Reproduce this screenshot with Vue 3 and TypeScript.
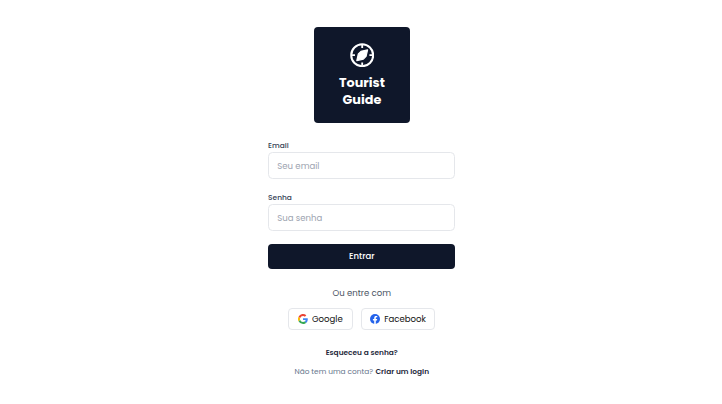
<script setup lang="ts">
import { ref } from 'vue'

interface Field {
  id: string
  label: string
  type: string
  placeholder: string
}

const fields: Field[] = [
  { id: 'email', label: 'Email', type: 'email', placeholder: 'Seu email' },
  { id: 'senha', label: 'Senha', type: 'password', placeholder: 'Sua senha' },
]

const values = ref<Record<string, string>>({ email: '', senha: '' })
</script>

<template>
  <main class="page">
    <div class="logo">
      <svg class="compass" viewBox="0 0 24 24" fill="none">
        <circle cx="12" cy="12" r="10.8" stroke="#fff" stroke-width="2" />
        <path d="M12 1.5v3.4M12 19.1v3.4M1.5 12h3.4M19.1 12h3.4" stroke="#fff" stroke-width="1.8" />
        <path d="M17.3 6.7 15.8 13.2 13.2 15.8 6.7 17.3 8.2 10.8 10.8 8.2Z" fill="#fff" stroke="#fff" stroke-width="1.2" stroke-linejoin="round" />
      </svg>
      <span class="brand">Tourist</span>
      <span class="brand">Guide</span>
    </div>

    <form class="form" @submit.prevent>
      <div v-for="f in fields" :key="f.id" class="field">
        <label :for="f.id">{{ f.label }}</label>
        <input :id="f.id" v-model="values[f.id]" :type="f.type" :placeholder="f.placeholder" />
      </div>
      <button class="submit" type="submit">Entrar</button>
    </form>

    <p class="divider">Ou entre com</p>
    <div class="social">
      <button class="google" type="button">
        <svg viewBox="0 0 48 48">
          <path fill="#fbbc05" d="M10.5 28.6A14.5 14.5 0 0 1 10.5 19.4L2.6 13.2a24 24 0 0 0 0 21.6z" />
          <path fill="#ea4335" d="M24 9.5c3.5 0 6.7 1.2 9.2 3.6L40 6.2A24 24 0 0 0 2.6 13.2l7.9 6.2A14.4 14.4 0 0 1 24 9.5z" />
          <path fill="#34a853" d="M24 48c6.5 0 12-2.1 15.9-5.8l-7.7-6c-2.2 1.5-4.9 2.3-8.2 2.3a14.4 14.4 0 0 1-13.5-9.9l-7.9 6.2A24 24 0 0 0 24 48z" />
          <path fill="#4285f4" d="M47 24.6c0-1.6-.2-3.1-.4-4.6H24v9h12.9a11 11 0 0 1-4.7 7.2l7.7 6c4.5-4.2 7.1-10.4 7.1-17.6z" />
        </svg>
        <span>Google</span>
      </button>
      <button class="facebook" type="button">
        <svg viewBox="0 0 24 24">
          <circle cx="12" cy="12" r="12" fill="#2563eb" />
          <path fill="#fff" d="M10.1 24v-8.5H7V12h3.1V9.4c0-3.1 1.8-4.7 4.6-4.7 1.3 0 2.7.2 2.7.2v3h-1.5c-1.5 0-2 .9-2 1.9V12h3.4l-.6 3.5h-2.8V24z" />
        </svg>
        <span>Facebook</span>
      </button>
    </div>

    <a class="forgot">Esqueceu a senha?</a>
    <p class="signup"><span>Não tem uma conta?</span><a>Criar um login</a></p>
  </main>
</template>

<style>
body {
  background: #fff;
}
</style>

<style scoped>
.page {
  box-sizing: border-box;
  height: 404px;
  padding: 27px 0 0 1.5px;
  display: flex;
  flex-direction: column;
  align-items: center;
  font-family: Poppins, Inter, sans-serif;
  color: #1e293b;
}

.logo {
  box-sizing: border-box;
  width: 95.8px;
  height: 95.8px;
  padding: 15.9px 0 0 0.4px;
  border-radius: 4px;
  background: #0f172a;
  display: flex;
  flex-direction: column;
  align-items: center;
}

.compass {
  width: 24.4px;
  height: 24.4px;
  margin-bottom: 6.7px;
}

.brand {
  color: #fff;
  font-size: 12.8px;
  font-weight: 700;
  line-height: 17px;
}

.form {
  width: 187.3px;
  margin-top: 17.2px;
}

.field {
  height: 52px;
  display: flex;
  flex-direction: column;
}

label {
  height: 12.4px;
  line-height: 12px;
  font-size: 7.45px;
  font-weight: 500;
  color: #334155;
}

input {
  box-sizing: border-box;
  width: 100%;
  height: 27px;
  padding: 1.2px 8.2px 0;
  border: 1px solid #e5e7eb;
  border-radius: 4.5px;
  background: #fff;
  font: inherit;
  font-size: 8.55px;
  outline: none;
}

input::placeholder {
  color: #9ca3af;
  opacity: 1;
}

button {
  padding: 0;
  border: 0;
  font: inherit;
}

.submit {
  width: 100%;
  height: 25.5px;
  display: block;
  border-radius: 4px;
  background: #0f172a;
  color: #fff;
  font-size: 8.5px;
  font-weight: 500;
}

.divider {
  margin: 16.4px 0 0;
  font-size: 8.55px;
  line-height: 14px;
  color: #4b5563;
}

.social {
  display: flex;
  gap: 8px;
  margin-top: 8px;
}

.social button {
  box-sizing: border-box;
  height: 22.5px;
  display: flex;
  align-items: center;
  gap: 4.2px;
  padding-left: 8.5px;
  border: 1px solid #e5e7eb;
  border-radius: 4px;
  background: #fff;
  font-size: 8.55px;
  color: #111;
}

.social svg {
  width: 10px;
  height: 10px;
  flex: none;
}

.google {
  width: 64.5px;
}

.social .facebook {
  width: 74.5px;
  gap: 4px;
}

.forgot {
  margin-top: 16.2px;
  font-size: 7.4px;
  line-height: 12px;
  font-weight: 600;
}

.signup {
  display: flex;
  gap: 2.4px;
  margin: 7px 0 0;
  font-size: 7.4px;
  line-height: 12px;
  color: #64748b;
}

.signup a {
  color: #1e293b;
  font-weight: 600;
}
</style>
